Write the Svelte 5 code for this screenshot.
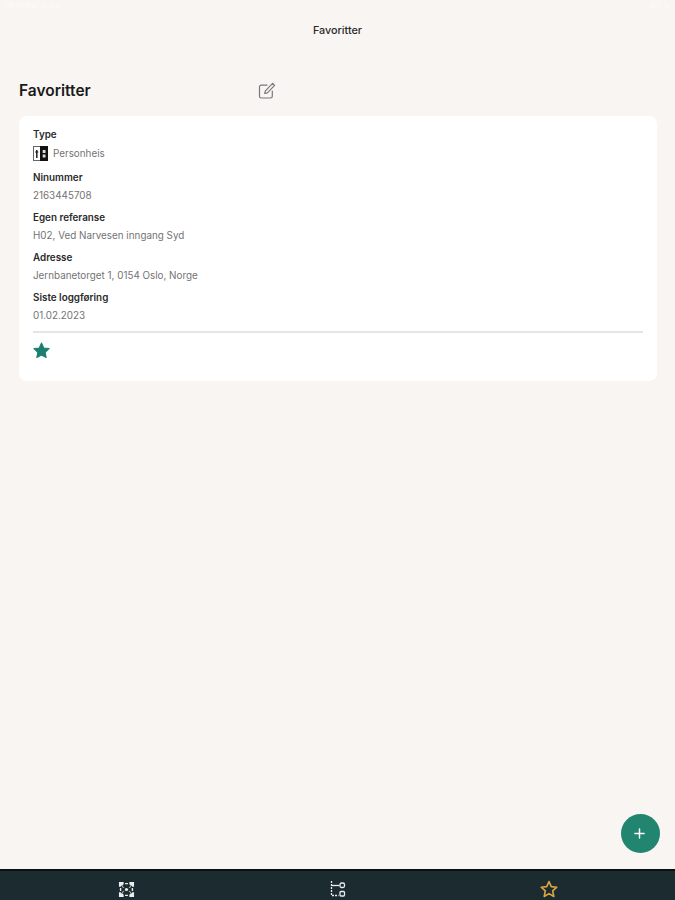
<script>
  const fields = [
    { label: 'Ninummer', value: '2163445708' },
    { label: 'Egen referanse', value: 'H02, Ved Narvesen inngang Syd' },
    { label: 'Adresse', value: 'Jernbanetorget 1, 0154 Oslo, Norge' },
    { label: 'Siste loggføring', value: '01.02.2023' }
  ];
</script>

<div class="page">
  <div class="status">
    <span>09:41 Man 6. feb</span>
    <span>100 %</span>
  </div>
  <header class="top">Favoritter</header>
  <main class="content">
    <div class="heading">
      <h1>Favoritter</h1>
      <svg class="edit" viewBox="0 0 18 18" width="18" height="18" fill="none" stroke="#77797a" stroke-width="1.2" stroke-linecap="round" stroke-linejoin="round">
        <path d="M9 3.2H3.2a1.7 1.7 0 0 0-1.7 1.7v9.4A1.7 1.7 0 0 0 3.2 16h9.4a1.7 1.7 0 0 0 1.7-1.7V9" />
        <path d="M14.6 1.4l2 2L9.4 10.8l-2.7.7.7-2.7z" />
      </svg>
    </div>
    <section class="card">
      <div class="field type">
        <div class="label">Type</div>
        <div class="value with-icon">
          <svg viewBox="0 0 15 15" width="15" height="15">
            <rect x="0.5" y="0.5" width="14" height="14" fill="#fff" stroke="#666" />
            <rect x="7" y="0" width="8" height="15" fill="#111" />
            <path d="M3.8 4v8" stroke="#222" stroke-width="1.5" />
            <path d="M2.3 6h3" stroke="#222" stroke-width="1.2" />
            <rect x="9.7" y="4" width="2.8" height="3" fill="#ddd" />
            <rect x="9.7" y="8.5" width="2.8" height="3" fill="#ddd" />
          </svg>
          <span>Personheis</span>
        </div>
      </div>
      {#each fields as f}
        <div class="field">
          <div class="label">{f.label}</div>
          <div class="value">{f.value}</div>
        </div>
      {/each}
      <hr />
      <svg class="star" viewBox="0 0 24 24" width="17" height="17">
        <path d="M12 1.5l3.2 6.9 7.5.9-5.500 5.200 1.400 7.500L12 18.400l-6.600 3.600 1.400-7.500L1.300 9.300l7.500-.9z" fill="#1d7f6e" stroke="#1d7f6e" stroke-width="1.5" stroke-linejoin="round" />
      </svg>
    </section>
  </main>
  <button class="fab" aria-label="Legg til">
    <svg viewBox="0 0 12 12" width="11" height="11" stroke="#fff" stroke-width="1.6" stroke-linecap="round">
      <path d="M6 1v10M1 6h10" />
    </svg>
  </button>
  <nav class="nav">
    <div class="tab">
      <svg viewBox="0 0 18 18" width="17" height="17" fill="#e9eded">
        <path d="M1 1h5v2.400L4.400 5 7 7.600 5 7 3.400 4.500 3 6H1zM17 1h-5v2.400L13.600 5 11 7.600 13 7l1.600-2.500L15 6h2zM1 17h5v-2.400L4.400 13 7 10.400 5 11l-1.600 2.500L3 12H1zM17 17h-5v-2.400l1.600-1.600L11 10.400 13 11l1.600 2.500L15 12h2z" />
        <circle cx="9" cy="9" r="1.7" />
        <path d="M7.500 2h3v1.500h-3zM7.500 14.500h3V16h-3zM2 7.500h1.500v3H2zM14.500 7.500H16v3h-1.500z" />
      </svg>
    </div>
    <div class="tab">
      <svg viewBox="0 0 16 18" width="16" height="18" fill="none" stroke="#e9eded" stroke-width="1.3">
        <path d="M1.500 1v14.500h7" stroke-dasharray="2 1" />
        <path d="M1.500 5.500h8" />
        <rect x="10" y="3" width="4.500" height="4.500" rx="1.500" />
        <rect x="10" y="11.500" width="4.500" height="4.500" rx="1" />
      </svg>
    </div>
    <div class="tab">
      <svg viewBox="0 0 24 24" width="18" height="18" fill="none" stroke="#d9a441" stroke-width="2.200" stroke-linejoin="round">
        <path d="M12 2l3 6.800 7.400.8-5.500 5 1.500 7.300L12 18.200l-6.400 3.700 1.500-7.300-5.500-5 7.400-.8z" />
      </svg>
    </div>
  </nav>
</div>

<style>
  :global(body) {
    margin: 0;
    background: #f9f5f2;
    font-family: Inter, "Liberation Sans", sans-serif;
  }
  .page {
    height: 900px;
    display: flex;
    flex-direction: column;
    position: relative;
    background: #f9f5f2;
    overflow: hidden;
  }
  .status {
    height: 12px;
    display: flex;
    justify-content: space-between;
    padding: 0 5px;
    font-size: 7px;
    line-height: 12px;
    color: #fdfbfa;
  }
  .top {
    height: 36px;
    display: flex;
    align-items: center;
    justify-content: center;
    font-size: 10.8px;
    font-weight: 500;
    color: #2a2a2a;
  }
  .content {
    flex: 1;
    padding: 29px 18px 0 19px;
  }
  .heading {
    display: flex;
    align-items: center;
    height: 26px;
    margin-bottom: 13px;
  }
  h1 {
    margin: 0;
    width: 239px;
    font-size: 15.5px;
    font-weight: 600;
    color: #1a1a1a;
  }
  .edit {
    margin-top: 2px;
  }
  .card {
    background: #fff;
    border-radius: 8px;
    height: 265px;
    box-sizing: border-box;
    padding: 12px 14px 0;
  }
  .field {
    height: 40px;
  }
  .field.type {
    height: 43px;
  }
  .label {
    font-size: 9.85px;
    font-weight: 600;
    line-height: 13px;
    color: #2a2a2a;
  }
  .value {
    margin-top: 5px;
    font-size: 9.85px;
    line-height: 13px;
    color: #737373;
  }
  .with-icon {
    display: flex;
    align-items: center;
    gap: 5px;
    height: 15px;
  }
  hr {
    border: 0;
    height: 2px;
    background: #e5e5e3;
    margin: 0;
  }
  .star {
    display: block;
    margin-top: 9px;
  }
  .fab {
    position: absolute;
    left: 621px;
    top: 814px;
    width: 39px;
    height: 39px;
    border: 0;
    padding: 0 2px 0 0;
    border-radius: 50%;
    background: #21856f;
    display: flex;
    align-items: center;
    justify-content: center;
  }
  .nav {
    height: 31px;
    box-sizing: border-box;
    border-top: 2px solid #0b1113;
    background: #1b2b2f;
    display: grid;
    grid-template-columns: repeat(3, 1fr);
  }
  .tab {
    display: flex;
    align-items: center;
    justify-content: center;
    padding-top: 8px;
    height: 20px;
  }
  .tab:nth-child(1) { margin-left: 27px; }
  .tab:nth-child(3) { margin-right: 27px; }
</style>
